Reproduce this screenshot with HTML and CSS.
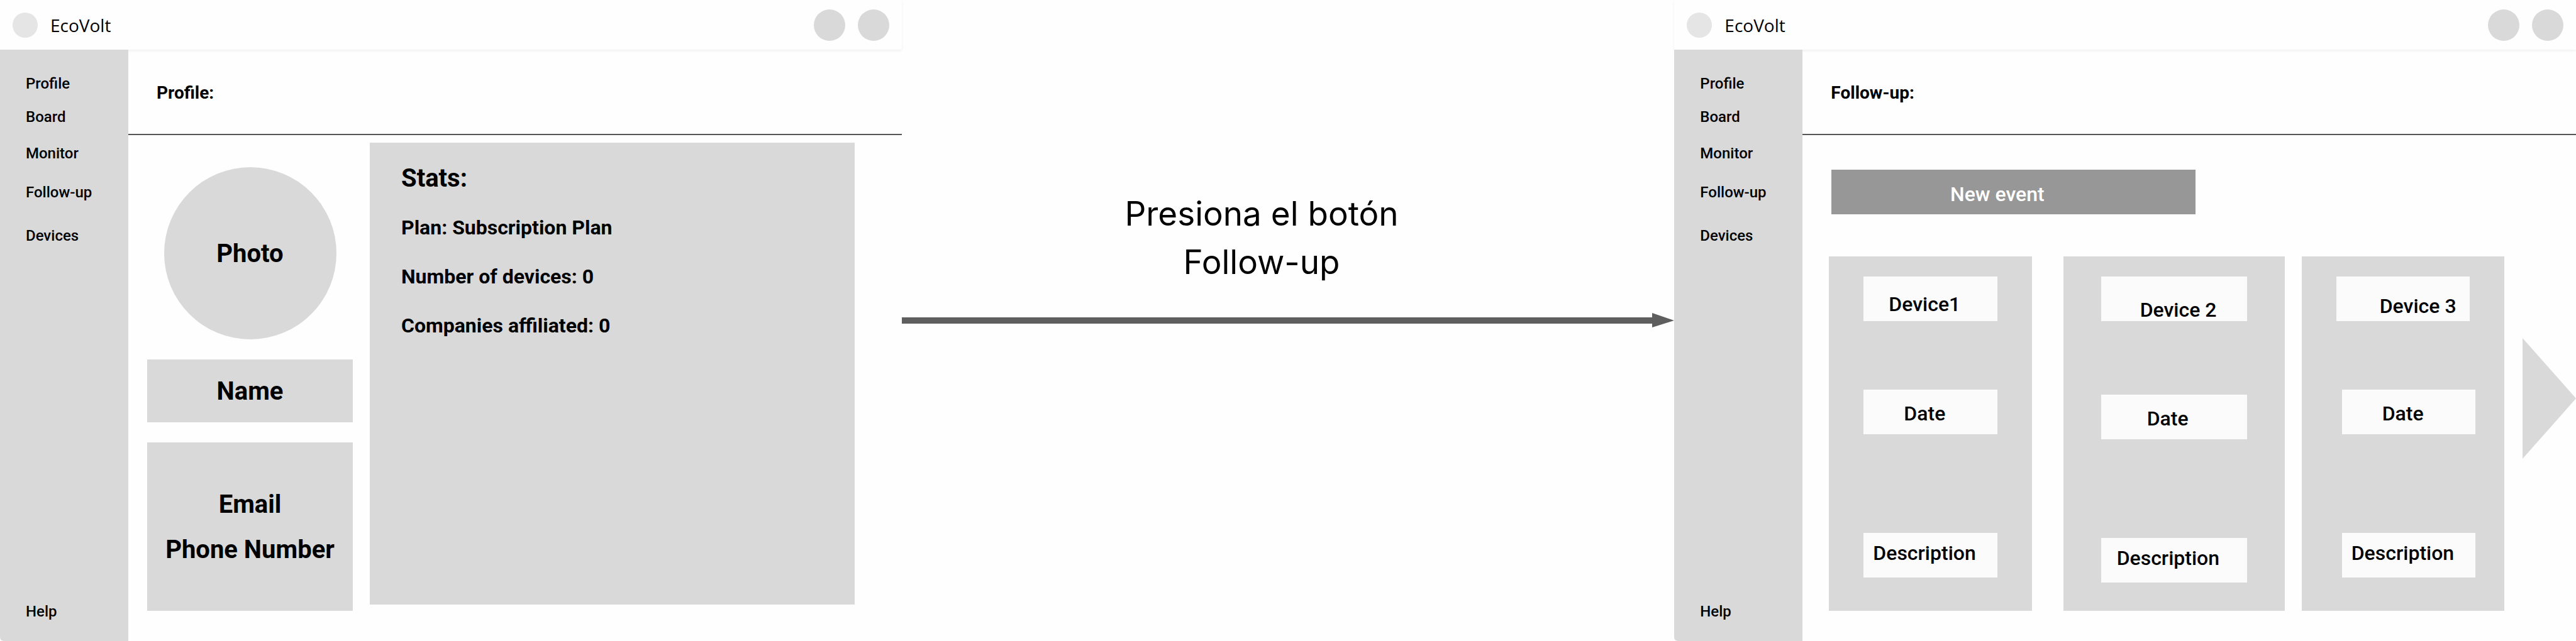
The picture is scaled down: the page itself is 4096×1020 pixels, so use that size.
FILE: index.html
```html
<!DOCTYPE html>
<html lang="en">
<head>
<meta charset="utf-8">
<meta name="viewport" content="width=device-width, initial-scale=1">
<title>EcoVolt wireframe flow</title>
<link rel="stylesheet" href="styles.css">
</head>
<body>
<main class="flow">

  <section class="screen">
    <header class="topbar">
      <span class="logo"></span>
      <span class="brand">EcoVolt</span>
      <button class="round" type="button" aria-label="Notifications"></button>
      <button class="round" type="button" aria-label="Account"></button>
    </header>
    <div class="body">
      <nav class="sidebar">
        <a href="#profile">Profile</a>
        <a href="#board">Board</a>
        <a href="#monitor">Monitor</a>
        <a href="#follow-up">Follow-up</a>
        <a href="#devices">Devices</a>
        <a class="help" href="#help">Help</a>
      </nav>
      <div class="content">
        <h1 class="title">Profile:</h1>
        <div class="profile">
          <div class="identity">
            <div class="photo">Photo</div>
            <div class="panel name">Name</div>
            <div class="panel contact">
              <p>Email</p>
              <p>Phone Number</p>
            </div>
          </div>
          <section class="panel stats">
            <h2>Stats:</h2>
            <p>Plan: Subscription Plan</p>
            <p>Number of devices: 0</p>
            <p>Companies affiliated: 0</p>
          </section>
        </div>
      </div>
    </div>
  </section>

  <section class="step">
    <p class="caption">Presiona el botón<br>Follow-up</p>
    <div class="arrow">
      <span class="shaft"></span>
      <svg class="head" viewBox="0 0 35 23" aria-hidden="true"><path d="M0 0L35 12L0 23Z"/></svg>
    </div>
  </section>

  <section class="screen">
    <header class="topbar">
      <span class="logo"></span>
      <span class="brand">EcoVolt</span>
      <button class="round" type="button" aria-label="Notifications"></button>
      <button class="round" type="button" aria-label="Account"></button>
    </header>
    <div class="body">
      <nav class="sidebar">
        <a href="#profile">Profile</a>
        <a href="#board">Board</a>
        <a href="#monitor">Monitor</a>
        <a href="#follow-up">Follow-up</a>
        <a href="#devices">Devices</a>
        <a class="help" href="#help">Help</a>
      </nav>
      <div class="content">
        <h1 class="title">Follow-up:</h1>
        <button class="new-event" type="button">New event</button>
        <div class="cards">
          <article class="card first">
            <div class="field device">Device1</div>
            <div class="field date">Date</div>
            <div class="field description">Description</div>
          </article>
          <article class="card second">
            <div class="field device">Device 2</div>
            <div class="field date">Date</div>
            <div class="field description">Description</div>
          </article>
          <article class="card third">
            <div class="field device">Device 3</div>
            <div class="field date">Date</div>
            <div class="field description">Description</div>
          </article>
          <button class="next" type="button" aria-label="Next devices">
            <svg viewBox="0 0 85 192" aria-hidden="true"><path d="M0 0L85 96L0 192Z"/></svg>
          </button>
        </div>
      </div>
    </div>
  </section>

</main>
</body>
</html>
```

FILE: styles.css
```css
* {
  box-sizing: border-box;
}

body {
  margin: 0;
  background: #fefefe;
  color: #000;
  font-family: Roboto, "Liberation Sans", sans-serif;
}

h1,
h2,
p {
  margin: 0;
}

button {
  border: 0;
  padding: 0;
  font: inherit;
}

.flow {
  display: grid;
  grid-template-columns: 1434fr 1229fr 1434fr;
  min-height: 100vh;
}

/* Application screen */

.screen {
  display: flex;
  flex-direction: column;
  min-width: 0;
}

.topbar {
  display: flex;
  align-items: center;
  gap: 20px;
  height: 79px;
  padding: 0 20px;
  box-shadow: 0 2px 4px rgba(0, 0, 0, 0.06);
}

.logo {
  width: 40px;
  height: 40px;
  border-radius: 50%;
  background: #e5e5e5;
}

.brand {
  margin-right: auto;
  font-family: "Open Sans", sans-serif;
  font-size: 28px;
  line-height: 40px;
}

.round {
  width: 50px;
  height: 50px;
  border-radius: 50%;
  background: #d9d9d9;
}

.body {
  position: relative;
  display: flex;
  flex: 1;
}

.sidebar {
  display: grid;
  grid-template-rows: 53px 58px 62px 69px 28px 1fr;
  width: 204px;
  padding: 40px 0 33px 41px;
  border-radius: 0 0 0 6px;
  background: #d9d9d9;
  font-size: 24px;
  font-weight: 500;
  line-height: 28px;
}

.sidebar a {
  color: inherit;
  text-decoration: none;
}

.help {
  align-self: end;
}

.content {
  display: flex;
  flex: 1;
  flex-direction: column;
  min-width: 0;
}

.title {
  height: 136px;
  padding: 53px 0 0 45px;
  border-bottom: 2px solid #555;
  font-size: 28px;
  font-weight: 700;
  line-height: 32px;
}

.panel {
  background: #d9d9d9;
}

/* Profile */

.profile {
  display: flex;
  flex: 1;
  gap: 27px;
  padding: 12px 75px 48px 30px;
}

.identity {
  display: flex;
  flex-direction: column;
  gap: 32px;
  width: 327px;
  margin-top: 39px;
  font-size: 40px;
  font-weight: 700;
  line-height: 72px;
  text-align: center;
}

.photo,
.name,
.contact {
  display: grid;
  align-content: center;
  justify-items: center;
  padding-top: 2px;
}

.photo {
  align-self: center;
  width: 274px;
  height: 274px;
  border-radius: 50%;
  background: #d9d9d9;
}

.name {
  height: 100px;
}

.contact {
  flex: 1;
}

.stats {
  flex: 1;
  margin-bottom: 10px;
  padding: 18px 50px;
  font-size: 32px;
  font-weight: 700;
  line-height: 78px;
}

.stats h2 {
  font-size: 40px;
  line-height: 78px;
}

/* Step between the two screens */

.step {
  display: flex;
  flex-direction: column;
  padding-top: 302px;
}

.caption {
  padding-right: 84px;
  font-family: Inter, sans-serif;
  font-size: 53px;
  line-height: 77px;
  text-align: center;
}

.arrow {
  display: flex;
  align-items: center;
  margin-top: 42px;
}

.shaft {
  flex: 1;
  height: 10px;
  background: #5e5e5e;
}

.head {
  width: 35px;
  height: 23px;
  fill: #5e5e5e;
}

/* Follow-up */

.new-event {
  width: 579px;
  height: 71px;
  margin: 55px 0 0 46px;
  padding: 6px 52px 0 0;
  background: #979797;
  color: #fff;
  font-size: 32px;
  font-weight: 500;
  line-height: 38px;
}

.cards {
  display: flex;
  flex: 1;
  margin: 67px 0 48px 42px;
}

.card {
  display: flex;
  flex: 322 1 0;
  flex-direction: column;
  padding: 32px 55px 0;
  background: #d9d9d9;
  font-size: 32px;
  font-weight: 500;
  line-height: 38px;
}

.field {
  height: 71px;
  background: #fbfbfb;
  white-space: nowrap;
}

.device {
  margin-bottom: 109px;
  padding: 25px 0 0 40px;
}

.date {
  margin-bottom: 157px;
  padding: 19px 0 0 64px;
}

.description {
  padding: 13px 0 0 15px;
}

.second {
  flex-grow: 352;
  margin: 0 27px 0 50px;
  padding: 32px 60px 0;
}

.second .device {
  margin-bottom: 117px;
  padding: 34px 0 0 62px;
}

.second .date {
  padding-left: 73px;
}

.second .description {
  padding-left: 25px;
}

.third .device {
  padding: 28px 0 0 69px;
}

.third .date,
.third .description {
  margin-left: 9px;
  margin-right: -9px;
}

.next {
  align-self: flex-start;
  width: 85px;
  height: 192px;
  margin: 130px 0 0 29px;
  background: none;
}

.next svg {
  display: block;
  width: 85px;
  height: 192px;
  fill: #d9d9d9;
}
```
